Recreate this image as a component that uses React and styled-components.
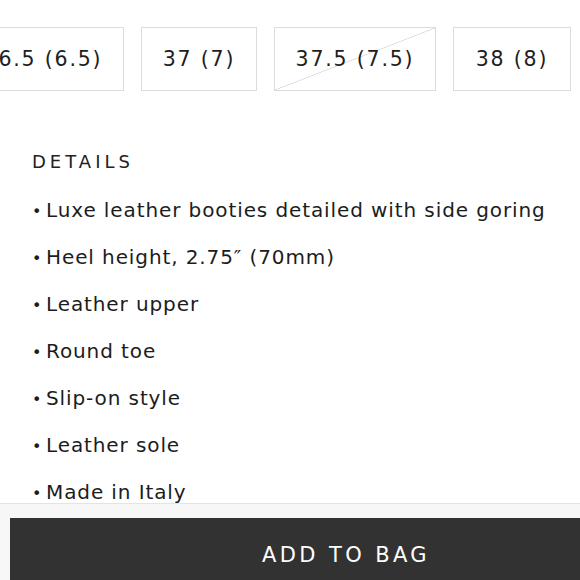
import React from "react";
import styled, { createGlobalStyle } from "styled-components";

const GlobalStyle = createGlobalStyle`
  html, body {
    margin: 0;
    padding: 0;
    background: #fff;
    overflow: hidden;
  }
  body {
    font-family: "DejaVu Sans", "Liberation Sans", sans-serif;
    color: #1c1c1c;
  }
`;

const sizes = [
  { label: "36.5 (6.5)", width: 162 },
  { label: "37 (7)", width: 116 },
  { label: "37.5 (7.5)", width: 162, soldOut: true },
  { label: "38 (8)", width: 118 },
];

const details = [
  "Luxe leather booties detailed with side goring",
  "Heel height, 2.75\u2033 (70mm)",
  "Leather upper",
  "Round toe",
  "Slip-on style",
  "Leather sole",
  "Made in Italy",
];

export default function App() {
  return (
    <Page>
      <GlobalStyle />
      <SizeRow>
        {sizes.map((s) => (
          <SizeBox key={s.label} $w={s.width} $soldOut={s.soldOut}>
            {s.label}
          </SizeBox>
        ))}
      </SizeRow>

      <Details>
        <Heading>DETAILS</Heading>
        <List>
          {details.map((d) => (
            <Item key={d}>
              <Bullet>•</Bullet>
              {d}
            </Item>
          ))}
        </List>
      </Details>

      <Footer>
        <BagButton>ADD TO BAG</BagButton>
      </Footer>
    </Page>
  );
}

const Page = styled.div`
  width: 580px;
  height: 580px;
  position: relative;
  overflow: hidden;
`;

// row is scrolled sideways, first size partly out of view
const SizeRow = styled.div`
  display: flex;
  gap: 17px;
  margin-left: -38px;
  padding-top: 27px;
`;

const SizeBox = styled.div`
  flex: 0 0 ${(p) => p.$w}px;
  height: 64px;
  box-sizing: border-box;
  border: 1px solid #dcdcdc;
  display: flex;
  align-items: center;
  justify-content: center;
  font-size: 20.5px;
  letter-spacing: 1.8px;
  color: #1e1e1e;
  background: ${(p) =>
    p.$soldOut
      ? "linear-gradient(to bottom right, transparent calc(50% - 0.7px), #d6d6d6 50%, transparent calc(50% + 0.7px))"
      : "#fff"};
`;

const Details = styled.div`
  padding: 59px 0 0 32px;
`;

const Heading = styled.div`
  font-size: 18px;
  letter-spacing: 4px;
  line-height: 24px;
  color: #222;
`;

const List = styled.ul`
  list-style: none;
  margin: 13px 0 0;
  padding: 0;
`;

const Item = styled.li`
  display: block;
  font-size: 20px;
  letter-spacing: 0.9px;
  line-height: 47px;
  height: 47px;
  white-space: nowrap;
`;

const Bullet = styled.span`
  display: inline-block;
  width: 14px;
  font-size: 16px;
  letter-spacing: 0;
`;

const Footer = styled.div`
  position: absolute;
  left: 0;
  right: 0;
  bottom: 0;
  height: 77px;
  box-sizing: border-box;
  border-top: 1px solid #e4e4e4;
  background: #f7f7f7;
  padding: 14px 0 0 10px;
`;

const BagButton = styled.div`
  width: 672px;
  height: 74px;
  background: #323232;
  color: #fff;
  display: flex;
  align-items: center;
  justify-content: center;
  font-size: 21px;
  letter-spacing: 3.4px;
`;
